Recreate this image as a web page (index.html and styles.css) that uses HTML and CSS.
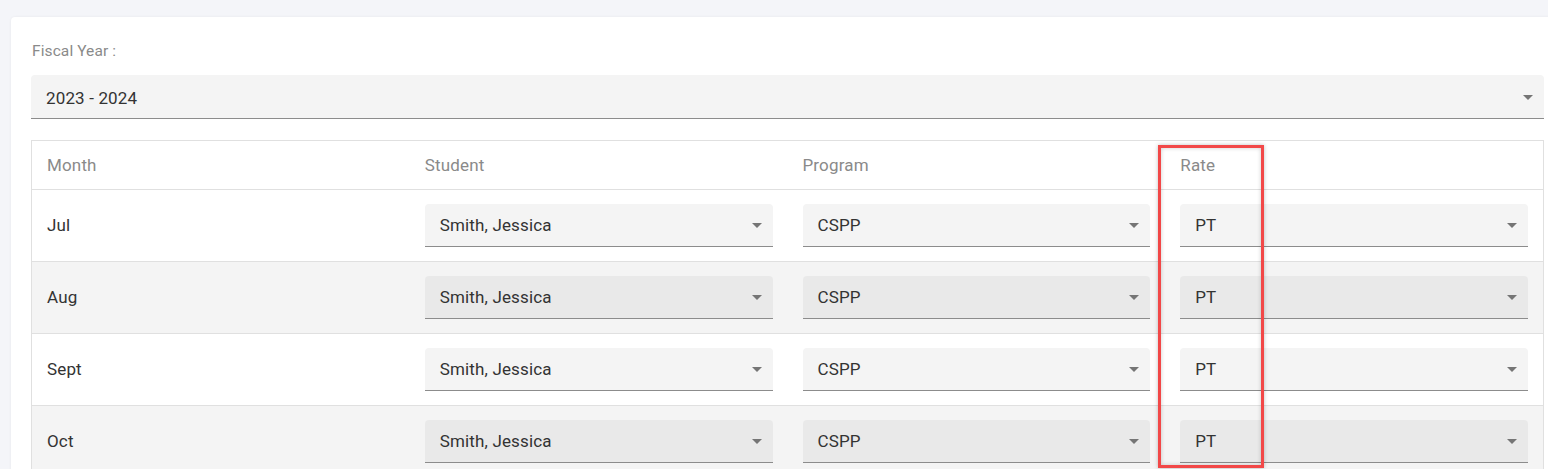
FILE: index.html
```html
<!DOCTYPE html>
<html lang="en">
<head>
<meta charset="utf-8">
<title>Fiscal Year Rates</title>
<link rel="stylesheet" href="styles.css">
</head>
<body>
<div class="page">
  <div class="card">
    <div class="field-label">Fiscal Year :</div>
    <div class="select select-lg">
      <span class="select-value">2023 - 2024</span>
      <span class="arrow"></span>
    </div>
    <div class="table-wrap">
      <div class="table">
        <div class="row head">
          <div class="cell">Month</div>
          <div class="cell">Student</div>
          <div class="cell">Program</div>
          <div class="cell">Rate</div>
        </div>
        <div class="row">
          <div class="cell">Jul</div>
          <div class="cell"><div class="select"><span class="select-value">Smith, Jessica</span><span class="arrow"></span></div></div>
          <div class="cell"><div class="select"><span class="select-value">CSPP</span><span class="arrow"></span></div></div>
          <div class="cell"><div class="select"><span class="select-value">PT</span><span class="arrow"></span></div></div>
        </div>
        <div class="row alt">
          <div class="cell">Aug</div>
          <div class="cell"><div class="select"><span class="select-value">Smith, Jessica</span><span class="arrow"></span></div></div>
          <div class="cell"><div class="select"><span class="select-value">CSPP</span><span class="arrow"></span></div></div>
          <div class="cell"><div class="select"><span class="select-value">PT</span><span class="arrow"></span></div></div>
        </div>
        <div class="row">
          <div class="cell">Sept</div>
          <div class="cell"><div class="select"><span class="select-value">Smith, Jessica</span><span class="arrow"></span></div></div>
          <div class="cell"><div class="select"><span class="select-value">CSPP</span><span class="arrow"></span></div></div>
          <div class="cell"><div class="select"><span class="select-value">PT</span><span class="arrow"></span></div></div>
        </div>
        <div class="row alt">
          <div class="cell">Oct</div>
          <div class="cell"><div class="select"><span class="select-value">Smith, Jessica</span><span class="arrow"></span></div></div>
          <div class="cell"><div class="select"><span class="select-value">CSPP</span><span class="arrow"></span></div></div>
          <div class="cell"><div class="select"><span class="select-value">PT</span><span class="arrow"></span></div></div>
        </div>
      </div>
      <div class="highlight"></div>
    </div>
  </div>
</div>
</body>
</html>
```
FILE: styles.css
```css
html, body {
  margin: 0;
  padding: 0;
  height: 469px;
  overflow: hidden;
  background: #f4f5f9;
  font-family: Roboto, "Liberation Sans", Arial, sans-serif;
}

.page {
  padding: 17px 0 0 11px;
  width: 1600px;
}

.card {
  width: 1513px;
  background: #ffffff;
  border-radius: 4px;
  padding: 25px 20px 20px 20px;
  box-shadow: 0 0 3px rgba(0, 0, 0, 0.06);
}

.field-label {
  font-size: 15.5px;
  line-height: 18px;
  letter-spacing: 0.1px;
  color: #8a8a8a;
  padding-left: 1px;
  margin-bottom: 15px;
}

.select {
  position: relative;
  display: flex;
  align-items: center;
  height: 43px;
  box-sizing: border-box;
  background: #f4f4f4;
  border-radius: 4px 4px 0 0;
  border-bottom: 1px solid #8c8c8c;
  padding: 0 30px 0 15px;
  font-size: 17px;
  letter-spacing: 0.15px;
  color: #333333;
}

.select-lg {
  height: 44px;
  padding-top: 3px;
}

.select-value {
  white-space: nowrap;
}

.arrow {
  position: absolute;
  right: 11px;
  top: 50%;
  margin-top: -2px;
  width: 0;
  height: 0;
  border-left: 5px solid transparent;
  border-right: 5px solid transparent;
  border-top: 5px solid #757575;
}

.table-wrap {
  position: relative;
  margin-top: 21px;
}

.table {
  border: 1px solid #e0e0e0;
  border-bottom: none;
}

.row {
  display: grid;
  grid-template-columns: repeat(4, 1fr);
  align-items: center;
  height: 71px;
  border-bottom: 1px solid #e0e0e0;
  font-size: 17px;
  letter-spacing: 0.15px;
  color: #333333;
}

.row.head {
  height: 48px;
  color: #8a8a8a;
}

.row > .cell:first-child {
  padding-bottom: 1px;
}

.row.alt {
  background: #f4f4f4;
}

.row.alt .select {
  background: #e9e9e9;
}

.cell {
  padding: 0 15px;
  min-width: 0;
}

.highlight {
  position: absolute;
  left: 1127px;
  top: 5px;
  width: 100px;
  height: 317px;
  border: 3px solid #f24848;
  box-shadow: 0 0 4px rgba(0, 0, 0, 0.25), inset 0 0 4px rgba(0, 0, 0, 0.2);
  pointer-events: none;
}
```
